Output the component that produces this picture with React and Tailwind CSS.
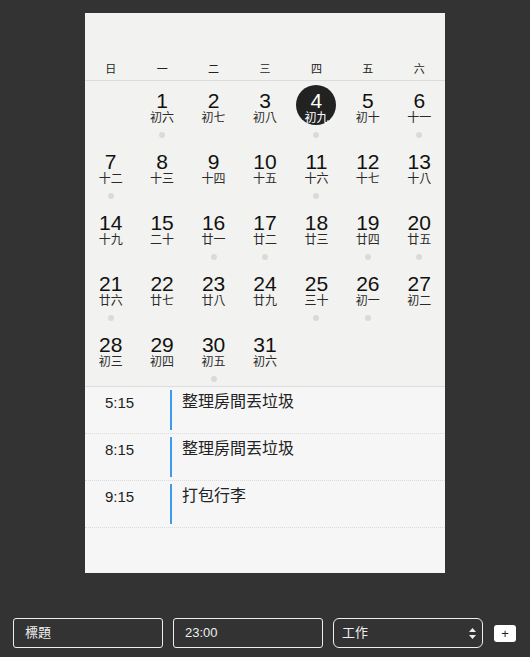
const WEEKDAYS = ['日', '一', '二', '三', '四', '五', '六'];

const LUNAR = [
  '初六', '初七', '初八', '初九', '初十', '十一', '十二', '十三', '十四', '十五',
  '十六', '十七', '十八', '十九', '二十', '廿一', '廿二', '廿三', '廿四', '廿五',
  '廿六', '廿七', '廿八', '廿九', '三十', '初一', '初二', '初三', '初四', '初五', '初六',
];

// days that have something scheduled
const DOTS = [1, 4, 6, 7, 11, 16, 17, 19, 20, 21, 25, 26, 30];
const TODAY = 4;
const FIRST_WEEKDAY = 1;

const EVENTS = [
  { time: '5:15', title: '整理房間丟垃圾' },
  { time: '8:15', title: '整理房間丟垃圾' },
  { time: '9:15', title: '打包行李' },
];

const SANS = "font-['Liberation_Sans','Noto_Sans_CJK_TC',sans-serif]";

function DayCell({ day }) {
  if (!day) return <div className="h-[61px]" />;
  const isToday = day === TODAY;
  return (
    <div className="h-[61px] flex flex-col items-center pt-[4px]">
      <div
        className={`w-[40px] h-[40px] rounded-full flex flex-col items-center justify-center ${
          isToday ? 'bg-[#222] text-white' : 'text-[#111]'
        }`}
      >
        <span className="text-[21px] leading-[21px] mt-[4px]">{day}</span>
        <span className={`text-[12px] leading-[14px] ${isToday ? 'text-white' : 'text-[#2a2a2a]'}`}>
          {LUNAR[day - 1]}
        </span>
      </div>
      {DOTS.includes(day) && <div className="mt-[7px] w-[6px] h-[6px] rounded-full bg-[#dadada]" />}
    </div>
  );
}

export default function App() {
  const cells = [];
  for (let i = 0; i < FIRST_WEEKDAY; i++) cells.push(null);
  for (let d = 1; d <= 31; d++) cells.push(d);
  while (cells.length % 7) cells.push(null);

  return (
    <div className={`min-h-[657px] bg-[#333333] ${SANS} pt-[13px]`}>
      {/* Calendar panel */}
      <div className="mx-auto w-[360px] h-[560px] bg-[#f2f2f0] flex flex-col">
        <div className="pt-[45px]">
          <div className="grid grid-cols-7 h-[23px] items-center border-b border-[#dcdcdc]">
            {WEEKDAYS.map(w => (
              <div key={w} className="text-center text-[11px] text-[#222]">{w}</div>
            ))}
          </div>
          <div className="grid grid-cols-7 border-b border-[#dcdcdc]">
            {cells.map((d, i) => <DayCell key={i} day={d} />)}
          </div>
        </div>

        {/* Events */}
        <div className="flex-1 bg-[#f6f6f6]">
          {EVENTS.map((e, i) => (
            <div key={i} className="flex h-[47px] border-b border-dotted border-[#dcdcdc]">
              <div className="w-[85px] pl-[20px] pt-[6px] text-[15px] leading-[20px] text-[#222]">{e.time}</div>
              <div className="w-[2px] bg-[#3d9bef] mt-[3px] h-[40px]" />
              <div className="pl-[10px] pt-[5px] text-[16px] leading-[20px] text-[#222]">{e.title}</div>
            </div>
          ))}
        </div>
      </div>

      {/* Add form */}
      <div className="flex items-center pl-[13px] mt-[45px]">
        <div className="w-[150px] h-[30px] border border-[#eee] rounded-[3px] flex items-center pl-[11px] text-[13px] text-[#eee]">
          標題
        </div>
        <div className="ml-[10px] w-[150px] h-[30px] border border-[#eee] rounded-[3px] flex items-center pl-[11px] text-[13px] text-[#eee]">
          23:00
        </div>
        <div className="ml-[10px] w-[150px] h-[30px] border border-[#eee] rounded-[6px] flex items-center justify-between pl-[8px] pr-[6px] text-[13px] text-[#eee]">
          <span>工作</span>
          <svg width="7" height="11" viewBox="0 0 7 11" fill="#eee">
            <path d="M3.5 0 L7 4 H0 Z" />
            <path d="M3.5 11 L7 7 H0 Z" />
          </svg>
        </div>
        <button className="ml-[11px] w-[22px] h-[17px] bg-white rounded-[3px] flex items-center justify-center text-[13px] leading-none text-[#222]">
          +
        </button>
      </div>
    </div>
  );
}
